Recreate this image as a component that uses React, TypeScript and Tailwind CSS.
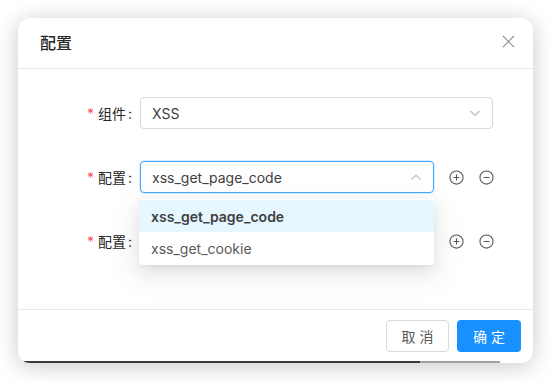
import React from "react";

const font = { fontFamily: 'Inter, "Noto Sans CJK SC", sans-serif' };
const cjk = { fontFamily: '"Noto Sans CJK SC", sans-serif' };

function ChevronDown() {
  return (
    <svg width="12" height="12" viewBox="0 0 12 12" fill="none" stroke="#bfbfbf" strokeWidth="1.2">
      <path d="M1.5 4 L6 8.5 L10.5 4" />
    </svg>
  );
}
function ChevronUp() {
  return (
    <svg width="12" height="12" viewBox="0 0 12 12" fill="none" stroke="#bfbfbf" strokeWidth="1.2">
      <path d="M1.5 8.5 L6 4 L10.5 8.5" />
    </svg>
  );
}
function PlusCircle() {
  return (
    <svg width="15" height="15" viewBox="0 0 16 16" fill="none" stroke="#595959" strokeWidth="1.2">
      <circle cx="8" cy="8" r="7" />
      <path d="M8 4.8 V11.2 M4.8 8 H11.2" />
    </svg>
  );
}
function MinusCircle() {
  return (
    <svg width="15" height="15" viewBox="0 0 16 16" fill="none" stroke="#595959" strokeWidth="1.2">
      <circle cx="8" cy="8" r="7" />
      <path d="M4.8 8 H11.2" />
    </svg>
  );
}

function Label({ text }: { text: string }) {
  return (
    <div className="w-[122px] flex items-center justify-end text-[14px] text-[#262626] shrink-0">
      <span className="text-[#ff4d4f] mr-[4px] text-[14px]">*</span>
      <span style={cjk}>{text}</span>
      <span className="ml-[2px] mr-[8px]">:</span>
    </div>
  );
}

export default function App() {
  return (
    <div className="w-[551px] h-[382px] bg-white pt-[18px] pl-[18px]" style={font}>
      <div className="relative w-[515px] h-[345px] bg-white rounded-[12px] overflow-hidden shadow-[0_3px_22px_rgba(0,0,0,0.22)] flex flex-col">
        {/* header */}
        <div className="h-[51px] shrink-0 border-b border-[#e8e8e8] flex items-center justify-between pl-[22px] pr-[18px] pb-[3px]">
          <span className="text-[16px] font-medium text-[#262626]" style={cjk}>配置</span>
          <svg width="13" height="13" viewBox="0 0 14 14" stroke="#8c8c8c" strokeWidth="1.3">
            <path d="M1 1 L13 13 M13 1 L1 13" />
          </svg>
        </div>
        {/* body */}
        <div className="relative flex-1 pt-[28px] flex flex-col gap-[32px]">
          <div className="flex items-center h-[32px]">
            <Label text="组件" />
            <div className="w-[353px] h-[32px] border border-[#d9d9d9] rounded-[4px] flex items-center justify-between pl-[11px] pr-[11px] text-[14px] text-[#404040]">
              <span>XSS</span>
              <ChevronDown />
            </div>
          </div>
          <div className="flex items-center h-[32px]">
            <Label text="配置" />
            <div className="w-[294px] h-[32px] border border-[#40a9ff] rounded-[4px] shadow-[0_0_0_1px_rgba(24,144,255,0.15)] flex items-center justify-between pl-[11px] pr-[11px] text-[14px] text-[#404040]">
              <span>xss_get_page_code</span>
              <ChevronUp />
            </div>
            <div className="ml-[15px] flex items-center gap-[15px]">
              <PlusCircle />
              <MinusCircle />
            </div>
          </div>
          <div className="flex items-center h-[32px]">
            <Label text="配置" />
            <div className="w-[294px] h-[32px] border border-[#d9d9d9] rounded-[4px]" />
            <div className="ml-[15px] flex items-center gap-[15px]">
              <PlusCircle />
              <MinusCircle />
            </div>
          </div>
          {/* dropdown */}
          <div className="absolute left-[121px] top-[130px] w-[295px] bg-white rounded-[4px] shadow-[0_3px_6px_-4px_rgba(0,0,0,0.12),0_6px_16px_0_rgba(0,0,0,0.08),0_9px_28px_8px_rgba(0,0,0,0.05)] py-[1px] text-[14px]">
            <div className="h-[32px] bg-[#e6f7ff] flex items-center px-[12px] font-semibold text-[#404040]">xss_get_page_code</div>
            <div className="h-[32px] flex items-center px-[12px] text-[#595959]">xss_get_cookie</div>
          </div>
        </div>
        {/* footer */}
        <div className="h-[54px] shrink-0 border-t border-[#e8e8e8] flex items-start justify-end gap-[8px] pr-[12px] pt-[10px]">
          <button className="w-[63px] h-[32px] border border-[#d9d9d9] rounded-[4px] bg-white text-[14px] text-[#595959] tracking-[4px] pl-[4px]" style={cjk}>取消</button>
          <button className="w-[64px] h-[32px] rounded-[4px] bg-[#1890ff] text-[14px] text-white tracking-[4px] pl-[4px]" style={cjk}>确定</button>
        </div>
        <div className="absolute bottom-0 left-0 right-0 h-[2px] flex">
          <div className="w-[402px] bg-[#3a3a3a]" />
          <div className="w-[80px] bg-[#a0a0a0]" />
          <div className="flex-1" />
        </div>
      </div>
    </div>
  );
}
